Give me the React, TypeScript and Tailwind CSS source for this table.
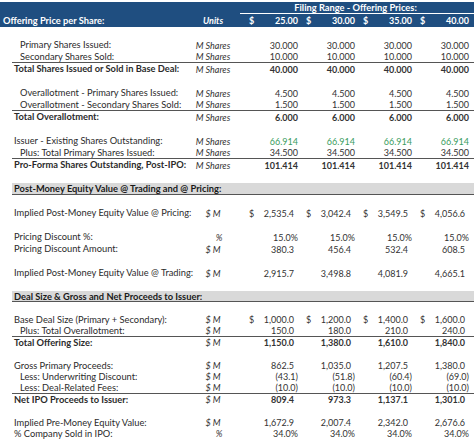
import React from "react";

type Fmt = "shares" | "money" | "pct";
type Row =
  | { kind: "blank"; h?: string }
  | { kind: "section"; label: string; h?: string }
  | {
      kind: "data";
      label: string;
      indent?: boolean;
      bold?: boolean;
      unit: string;
      values: string[];
      fmt: Fmt;
      dollar?: boolean;
      green?: boolean;
      line?: boolean;
      h?: string;
    };

const TOP = "h-[12px]";
const BOT = "h-[11.45px]";

const rows: Row[] = [
  { kind: "blank", h: TOP },
  { kind: "data", label: "Primary Shares Issued:", indent: true, unit: "M Shares", values: ["30.000", "30.000", "30.000", "30.000"], fmt: "shares", h: TOP },
  { kind: "data", label: "Secondary Shares Sold:", indent: true, unit: "M Shares", values: ["10.000", "10.000", "10.000", "10.000"], fmt: "shares", line: true, h: TOP },
  { kind: "data", label: "Total Shares Issued or Sold in Base Deal:", bold: true, unit: "M Shares", values: ["40.000", "40.000", "40.000", "40.000"], fmt: "shares", h: TOP },
  { kind: "blank", h: TOP },
  { kind: "data", label: "Overallotment - Primary Shares Issued:", indent: true, unit: "M Shares", values: ["4.500", "4.500", "4.500", "4.500"], fmt: "shares", h: TOP },
  { kind: "data", label: "Overallotment - Secondary Shares Sold:", indent: true, unit: "M Shares", values: ["1.500", "1.500", "1.500", "1.500"], fmt: "shares", line: true, h: TOP },
  { kind: "data", label: "Total Overallotment:", bold: true, unit: "M Shares", values: ["6.000", "6.000", "6.000", "6.000"], fmt: "shares", h: TOP },
  { kind: "blank", h: TOP },
  { kind: "data", label: "Issuer - Existing Shares Outstanding:", unit: "M Shares", values: ["66.914", "66.914", "66.914", "66.914"], fmt: "shares", green: true, h: TOP },
  { kind: "data", label: "Plus: Total Primary Shares Issued:", indent: true, unit: "M Shares", values: ["34.500", "34.500", "34.500", "34.500"], fmt: "shares", line: true, h: TOP },
  { kind: "data", label: "Pro-Forma Shares Outstanding, Post-IPO:", bold: true, unit: "M Shares", values: ["101.414", "101.414", "101.414", "101.414"], fmt: "shares", h: TOP },
  { kind: "blank", h: TOP },
  { kind: "section", label: "Post-Money Equity Value @ Trading and @ Pricing:", h: TOP },
  { kind: "blank", h: TOP },
  { kind: "data", label: "Implied Post-Money Equity Value @ Pricing:", unit: "$ M", values: ["2,535.4", "3,042.4", "3,549.5", "4,056.6"], fmt: "money", dollar: true, h: TOP },
  { kind: "blank", h: TOP },
  { kind: "data", label: "Pricing Discount %:", unit: "%", values: ["15.0%", "15.0%", "15.0%", "15.0%"], fmt: "pct", h: TOP },
  { kind: "data", label: "Pricing Discount Amount:", unit: "$ M", values: ["380.3", "456.4", "532.4", "608.5"], fmt: "money", h: TOP },
  { kind: "blank", h: TOP },
  { kind: "data", label: "Implied Post-Money Equity Value @ Trading:", unit: "$ M", values: ["2,915.7", "3,498.8", "4,081.9", "4,665.1"], fmt: "money", h: TOP },
  { kind: "blank", h: TOP },
  { kind: "section", label: "Deal Size & Gross and Net Proceeds to Issuer:", h: BOT },
  { kind: "blank", h: BOT },
  { kind: "data", label: "Base Deal Size (Primary + Secondary):", unit: "$ M", values: ["1,000.0", "1,200.0", "1,400.0", "1,600.0"], fmt: "money", dollar: true, h: BOT },
  { kind: "data", label: "Plus: Total Overallotment:", indent: true, unit: "$ M", values: ["150.0", "180.0", "210.0", "240.0"], fmt: "money", line: true, h: BOT },
  { kind: "data", label: "Total Offering Size:", bold: true, unit: "$ M", values: ["1,150.0", "1,380.0", "1,610.0", "1,840.0"], fmt: "money", h: BOT },
  { kind: "blank", h: BOT },
  { kind: "data", label: "Gross Primary Proceeds:", unit: "$ M", values: ["862.5", "1,035.0", "1,207.5", "1,380.0"], fmt: "money", h: BOT },
  { kind: "data", label: "Less: Underwriting Discount:", indent: true, unit: "$ M", values: ["(43.1)", "(51.8)", "(60.4)", "(69.0)"], fmt: "money", h: BOT },
  { kind: "data", label: "Less: Deal-Related Fees:", indent: true, unit: "$ M", values: ["(10.0)", "(10.0)", "(10.0)", "(10.0)"], fmt: "money", line: true, h: BOT },
  { kind: "data", label: "Net IPO Proceeds to Issuer:", bold: true, unit: "$ M", values: ["809.4", "973.3", "1,137.1", "1,301.0"], fmt: "money", h: BOT },
  { kind: "blank", h: BOT },
  { kind: "data", label: "Implied Pre-Money Equity Value:", unit: "$ M", values: ["1,672.9", "2,007.4", "2,342.0", "2,676.6"], fmt: "money", h: BOT },
  { kind: "data", label: "% Company Sold in IPO:", unit: "%", values: ["34.0%", "34.0%", "34.0%", "34.0%"], fmt: "pct", h: BOT },
];

function ValueCell({ value, fmt, dollar, bold, green }: { value: string; fmt: Fmt; dollar?: boolean; bold?: boolean; green?: boolean }) {
  const padParen = fmt === "money" && !value.startsWith("(");
  return (
    <div
      className={
        "w-[57px] shrink-0 flex items-center justify-between pl-[6px] pr-[2px] " +
        (bold ? "font-bold " : "") +
        (green ? "text-[#3a9d60]" : "text-[#333333]")
      }
    >
      <span className="text-[#333333]">{dollar ? "$" : ""}</span>
      <span className={padParen ? "pr-[4px]" : ""}>{value}</span>
    </div>
  );
}

function RowView({ row }: { row: Row }) {
  if (row.kind === "blank") return <div className={row.h} />;
  if (row.kind === "section") {
    return (
      <div className={"flex " + row.h}>
        <div className="w-[12px] shrink-0" />
        <div className="flex-1 flex items-center bg-[#d9d9d9] border-b border-[#555555] pl-[2px] font-bold text-[9.3px] text-[#1a1a1a] whitespace-nowrap">
          {row.label}
        </div>
      </div>
    );
  }
  return (
    <div className={"flex " + row.h}>
      <div className="w-[12px] shrink-0" />
      <div className={"flex-1 flex items-stretch " + (row.line ? "border-b-[1.5px] border-[#555555]" : "")}>
        <div
          className={
            "w-[178px] shrink-0 flex items-center whitespace-nowrap text-[9.3px] text-[#2b2b2b] " +
            (row.indent ? "pl-[8px] " : "pl-[2px] ") +
            (row.bold ? "font-bold" : "")
          }
        >
          {row.label}
        </div>
        <div className="w-[46px] shrink-0 flex items-center justify-center italic text-[#333333]">
          <span className={row.unit === "%" ? "pl-[12px]" : ""}>{row.unit}</span>
        </div>
        <div className="w-[7px] shrink-0" />
        {row.values.map((v, i) => (
          <ValueCell key={i} value={v} fmt={row.fmt} dollar={row.dollar} bold={row.bold} green={row.green} />
        ))}
      </div>
    </div>
  );
}

export default function App() {
  const prices = ["25.00", "30.00", "35.00", "40.00"];
  return (
    <div
      className="w-[474px] h-[442px] overflow-hidden bg-white pt-[2px] text-[9px] leading-none"
      style={{ fontFamily: "Lato, 'Open Sans', 'Liberation Sans', sans-serif" }}
    >
      {/* header row 1 */}
      <div className="flex h-[12px] bg-[#1f4e80]">
        <div className="w-[240px] shrink-0" />
        <div className="flex-1 flex items-center justify-center border-b border-white font-bold text-[9.3px] text-white pr-[3px]">
          Filing Range - Offering Prices:
        </div>
      </div>
      {/* header row 2 */}
      <div className="flex h-[13px] bg-[#1f4e80] text-white font-bold">
        <div className="w-[190px] shrink-0 flex items-center pl-[3px] whitespace-nowrap text-[9.3px]">Offering Price per Share:</div>
        <div className="w-[46px] shrink-0 flex items-center justify-center italic">Units</div>
        <div className="w-[7px] shrink-0" />
        {prices.map((p) => (
          <div key={p} className="w-[57px] shrink-0 flex items-center justify-between pl-[6px] pr-[2px]">
            <span>$</span>
            <span>{p}</span>
          </div>
        ))}
      </div>
      {rows.map((r, i) => (
        <RowView key={i} row={r} />
      ))}
    </div>
  );
}
